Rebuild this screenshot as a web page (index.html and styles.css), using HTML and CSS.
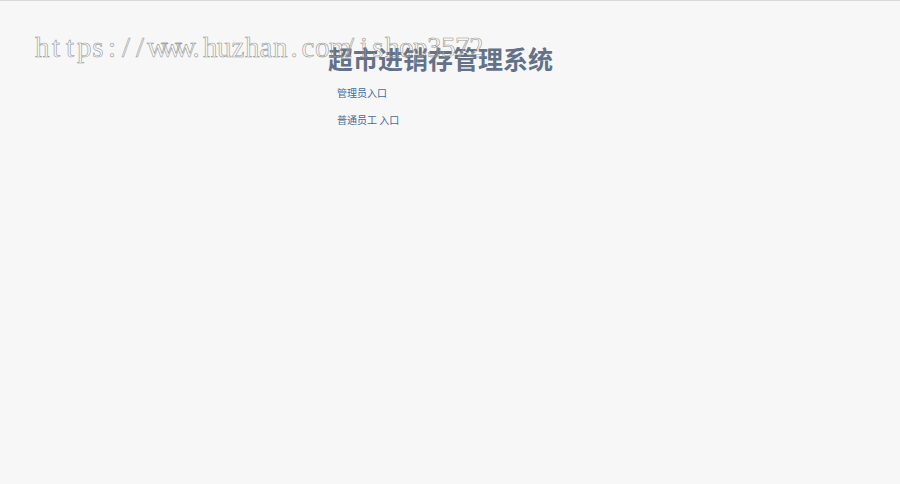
FILE: index.html
```html
<!DOCTYPE html>
<html lang="zh">
<head>
<meta charset="utf-8">
<title>超市进销存管理系统</title>
<link rel="stylesheet" href="styles.css">
</head>
<body>
<div class="wrap">
  <h1 class="title">超市进销存管理系统</h1>
  <ul class="links">
    <li><a href="#">管理员入口</a></li>
    <li><a href="#">普通员工 入口</a></li>
  </ul>
</div>
<div class="watermark"><span>h</span><span>t</span><span>t</span><span>p</span><span>s</span><span>:</span><span>/</span><span>/</span><span>w</span><span>w</span><span>w</span><span>.</span><span>h</span><span>u</span><span>z</span><span>h</span><span>a</span><span>n</span><span>.</span><span>c</span><span>o</span><span>m</span><span>/</span><span>i</span><span>s</span><span>h</span><span>o</span><span>p</span><span>3</span><span>5</span><span>7</span><span>2</span></div>
</body>
</html>
```
FILE: styles.css
```css
html, body {
  margin: 0;
  padding: 0;
}
body {
  background: #f7f7f7;
  border-top: 1px solid #d9d9d9;
  height: 483px;
  font-family: "Noto Sans CJK SC", "Noto Sans", sans-serif;
  position: relative;
  overflow: hidden;
}
.wrap {
  width: 244px;
  margin: 0 auto;
  padding-top: 41px;
}
.title {
  margin: 0;
  font-size: 25px;
  line-height: 32px;
  font-weight: 700;
  color: #637289;
  white-space: nowrap;
}
.links {
  list-style: none;
  margin: 12px 0 0;
  padding: 0 0 0 9px;
}
.links li {
  font-size: 10px;
  line-height: 14px;
  margin-bottom: 13px;
}
.links a {
  color: #3c6ca0;
  text-decoration: none;
}
.watermark {
  position: absolute;
  left: 35px;
  top: 26px;
  display: flex;
  font-family: "Liberation Serif", "DejaVu Serif", serif;
  font-size: 29px;
  line-height: 40px;
  color: transparent;
  -webkit-text-stroke: 0.6px #9a9a9a;
  white-space: nowrap;
  pointer-events: none;
}
.watermark span {
  display: block;
  width: 14px;
  text-align: center;
}
```
